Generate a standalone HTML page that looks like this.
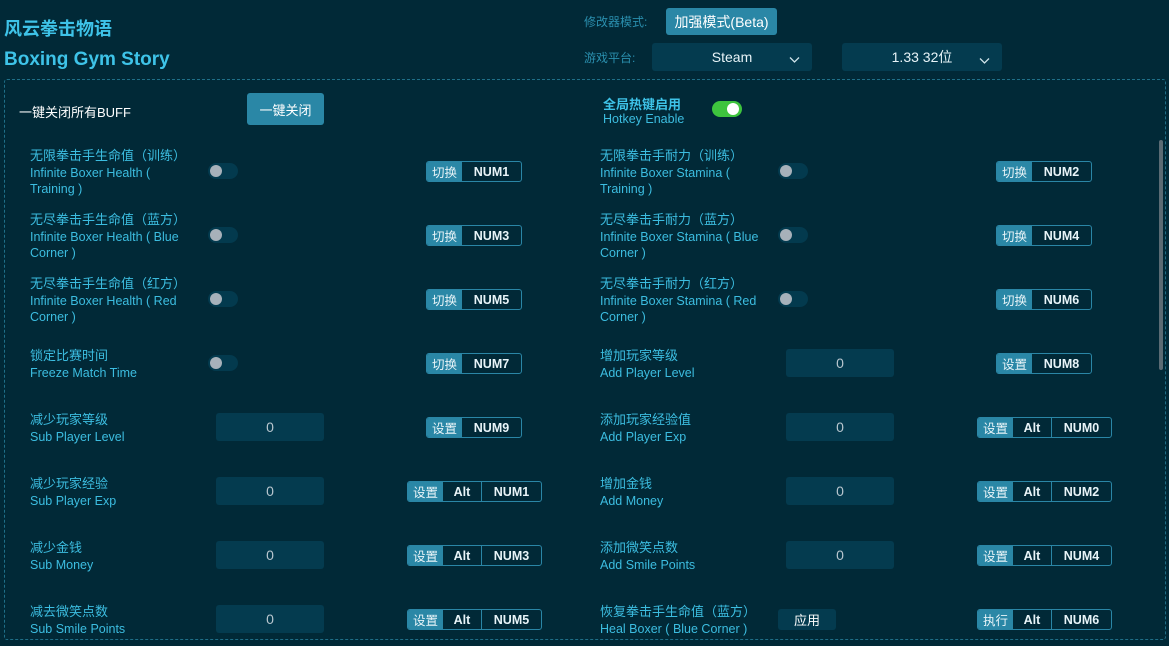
<!DOCTYPE html>
<html><head><meta charset="utf-8"><style>
*{margin:0;padding:0;box-sizing:border-box}
body{width:1169px;height:646px;background:#012937;font-family:"Liberation Sans","Noto Sans CJK SC",sans-serif;position:relative;overflow:hidden;color:#3cbde0}
.a{position:absolute;white-space:nowrap}
.t1{font-size:18px;font-weight:bold;color:#3ec3e8}
.lab{font-size:13px;line-height:16.5px;color:#3cbde0}
.lab .en{font-size:12.5px}
.tg{position:absolute;width:30px;height:16px;border-radius:8px;background:#033a4e}
.tg::after{content:"";position:absolute;left:2px;top:2px;width:12px;height:12px;border-radius:50%;background:#a7b1ba}
.k{position:absolute;height:21px;border:1px solid #2a86a6;border-radius:3px;display:flex;font-size:12.5px;color:#e8f4f8;font-weight:bold;overflow:hidden}
.k span{display:flex;align-items:center;justify-content:center;height:100%}
.k .f{background:#2a87a6;width:35px;font-weight:normal}
.k .alt{width:39px;border-right:1px solid #2a86a6}
.k .n{width:59px}
.in{position:absolute;width:108px;height:28px;background:#043b4f;border-radius:3px;color:#b9c7cf;font-size:14px;display:flex;align-items:center;justify-content:center}
.sel{position:absolute;height:28px;background:#043b4f;border-radius:3px;color:#e8f4f8;font-size:14px;display:flex;align-items:center;justify-content:center}
.btn{position:absolute;background:#2a87a6;border-radius:3px;color:#fff;font-size:13px;display:flex;align-items:center;justify-content:center}
</style></head><body>
<div class="a t1" style="left:4px;top:15px">风云拳击物语</div>
<div class="a t1" style="left:4px;top:49px;font-size:19px">Boxing Gym Story</div>
<div class="a" style="left:584px;top:13px;font-size:12px;color:#2a8fae">修改器模式:</div>
<div class="btn" style="left:666px;top:8px;width:111px;height:27px;font-size:14px">加强模式(Beta)</div>
<div class="a" style="left:584px;top:49px;font-size:12px;color:#2a8fae">游戏平台:</div>
<div class="sel" style="left:652px;top:43px;width:160px">Steam</div>
<svg class="a" style="left:789px;top:56px" width="11" height="8"><path d="M1 1.5 L5.5 6 L10 1.5" stroke="#cfe3ea" stroke-width="1.3" fill="none"/></svg>
<div class="sel" style="left:842px;top:43px;width:160px">1.33 32位</div>
<svg class="a" style="left:979px;top:57px" width="11" height="8"><path d="M1 1.5 L5.5 6 L10 1.5" stroke="#cfe3ea" stroke-width="1.3" fill="none"/></svg>
<div class="a" style="left:4px;top:79px;width:1162px;height:561px;border:1px dashed #1f6f88;border-radius:3px"></div>
<div class="a" style="left:1159px;top:140px;width:4px;height:230px;background:#5a6b74;border-radius:2px"></div>
<div class="a" style="left:19px;top:102px;font-size:13px;color:#fff">一键关闭所有BUFF</div>
<div class="btn" style="left:247px;top:93px;width:77px;height:32px">一键关闭</div>
<div class="a" style="left:603px;top:94px;font-size:13px;font-weight:bold;color:#3ec3e8">全局热键启用</div>
<div class="a" style="left:603px;top:112px;font-size:12.5px;color:#3cbde0">Hotkey Enable</div>
<div class="a" style="left:712px;top:101px;width:30px;height:16px;border-radius:8px;background:#3ec43e"><div style="position:absolute;right:3px;top:2px;width:12px;height:12px;border-radius:50%;background:#fff"></div></div>

<div class="a lab" style="left:30px;top:148px">无限拳击手生命值（训练）<br><span class="en">Infinite Boxer Health (<br>Training )</span></div>
<div class="tg" style="left:208px;top:163px"></div>
<div class="k" style="left:426px;top:161px"><span class="f">切换</span><span class="n">NUM1</span></div>
<div class="a lab" style="left:30px;top:212px">无尽拳击手生命值（蓝方）<br><span class="en">Infinite Boxer Health ( Blue<br>Corner )</span></div>
<div class="tg" style="left:208px;top:227px"></div>
<div class="k" style="left:426px;top:225px"><span class="f">切换</span><span class="n">NUM3</span></div>
<div class="a lab" style="left:30px;top:276px">无尽拳击手生命值（红方）<br><span class="en">Infinite Boxer Health ( Red<br>Corner )</span></div>
<div class="tg" style="left:208px;top:291px"></div>
<div class="k" style="left:426px;top:289px"><span class="f">切换</span><span class="n">NUM5</span></div>
<div class="a lab" style="left:30px;top:348px">锁定比赛时间<br><span class="en">Freeze Match Time</span></div>
<div class="tg" style="left:208px;top:355px"></div>
<div class="k" style="left:426px;top:353px"><span class="f">切换</span><span class="n">NUM7</span></div>
<div class="a lab" style="left:30px;top:412px">减少玩家等级<br><span class="en">Sub Player Level</span></div>
<div class="in" style="left:216px;top:413px">0</div>
<div class="k" style="left:426px;top:417px"><span class="f">设置</span><span class="n">NUM9</span></div>
<div class="a lab" style="left:30px;top:476px">减少玩家经验<br><span class="en">Sub Player Exp</span></div>
<div class="in" style="left:216px;top:477px">0</div>
<div class="k" style="left:407px;top:481px"><span class="f">设置</span><span class="alt">Alt</span><span class="n">NUM1</span></div>
<div class="a lab" style="left:30px;top:540px">减少金钱<br><span class="en">Sub Money</span></div>
<div class="in" style="left:216px;top:541px">0</div>
<div class="k" style="left:407px;top:545px"><span class="f">设置</span><span class="alt">Alt</span><span class="n">NUM3</span></div>
<div class="a lab" style="left:30px;top:604px">减去微笑点数<br><span class="en">Sub Smile Points</span></div>
<div class="in" style="left:216px;top:605px">0</div>
<div class="k" style="left:407px;top:609px"><span class="f">设置</span><span class="alt">Alt</span><span class="n">NUM5</span></div>

<div class="a lab" style="left:600px;top:148px">无限拳击手耐力（训练）<br><span class="en">Infinite Boxer Stamina (<br>Training )</span></div>
<div class="tg" style="left:778px;top:163px"></div>
<div class="k" style="left:996px;top:161px"><span class="f">切换</span><span class="n">NUM2</span></div>
<div class="a lab" style="left:600px;top:212px">无尽拳击手耐力（蓝方）<br><span class="en">Infinite Boxer Stamina ( Blue<br>Corner )</span></div>
<div class="tg" style="left:778px;top:227px"></div>
<div class="k" style="left:996px;top:225px"><span class="f">切换</span><span class="n">NUM4</span></div>
<div class="a lab" style="left:600px;top:276px">无尽拳击手耐力（红方）<br><span class="en">Infinite Boxer Stamina ( Red<br>Corner )</span></div>
<div class="tg" style="left:778px;top:291px"></div>
<div class="k" style="left:996px;top:289px"><span class="f">切换</span><span class="n">NUM6</span></div>
<div class="a lab" style="left:600px;top:348px">增加玩家等级<br><span class="en">Add Player Level</span></div>
<div class="in" style="left:786px;top:349px">0</div>
<div class="k" style="left:996px;top:353px"><span class="f">设置</span><span class="n">NUM8</span></div>
<div class="a lab" style="left:600px;top:412px">添加玩家经验值<br><span class="en">Add Player Exp</span></div>
<div class="in" style="left:786px;top:413px">0</div>
<div class="k" style="left:977px;top:417px"><span class="f">设置</span><span class="alt">Alt</span><span class="n">NUM0</span></div>
<div class="a lab" style="left:600px;top:476px">增加金钱<br><span class="en">Add Money</span></div>
<div class="in" style="left:786px;top:477px">0</div>
<div class="k" style="left:977px;top:481px"><span class="f">设置</span><span class="alt">Alt</span><span class="n">NUM2</span></div>
<div class="a lab" style="left:600px;top:540px">添加微笑点数<br><span class="en">Add Smile Points</span></div>
<div class="in" style="left:786px;top:541px">0</div>
<div class="k" style="left:977px;top:545px"><span class="f">设置</span><span class="alt">Alt</span><span class="n">NUM4</span></div>
<div class="a lab" style="left:600px;top:604px">恢复拳击手生命值（蓝方）<br><span class="en">Heal Boxer ( Blue Corner )</span></div>
<div class="in" style="left:778px;top:609px;width:58px;height:21px;color:#fff;font-size:13px">应用</div>
<div class="k" style="left:977px;top:609px"><span class="f">执行</span><span class="alt">Alt</span><span class="n">NUM6</span></div>
</body></html>
